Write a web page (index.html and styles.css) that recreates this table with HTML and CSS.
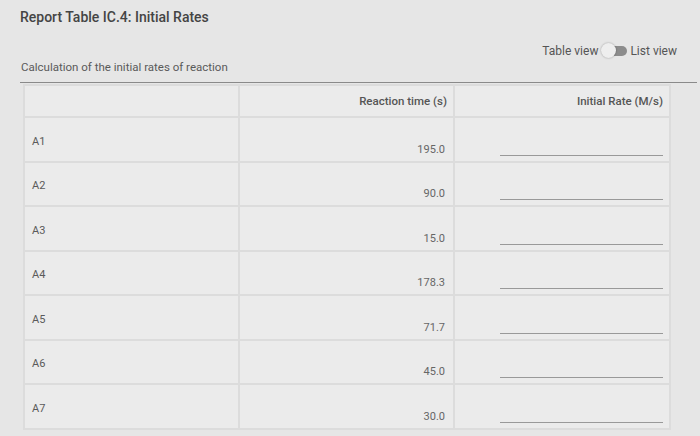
FILE: index.html
```html
<!DOCTYPE html>
<html>
<head>
<meta charset="utf-8">
<link rel="stylesheet" href="styles.css">
</head>
<body>
<div class="page">
  <h1 class="title">Report Table IC.4: Initial Rates</h1>
  <div class="toggle-row">
    <span class="toggle-label">Table view</span>
    <span class="switch"><span class="track"></span><span class="knob"></span></span>
    <span class="toggle-label">List view</span>
  </div>
  <div class="caption">Calculation of the initial rates of reaction</div>
  <table class="data">
    <thead>
      <tr>
        <th class="c1"></th>
        <th class="c2">Reaction time (s)</th>
        <th class="c3">Initial Rate (M/s)</th>
      </tr>
    </thead>
    <tbody>
      <tr><td class="label">A1</td><td class="val">195.0</td><td class="inp"><span class="line"></span></td></tr>
      <tr><td class="label">A2</td><td class="val">90.0</td><td class="inp"><span class="line"></span></td></tr>
      <tr><td class="label">A3</td><td class="val">15.0</td><td class="inp"><span class="line"></span></td></tr>
      <tr><td class="label">A4</td><td class="val">178.3</td><td class="inp"><span class="line"></span></td></tr>
      <tr><td class="label">A5</td><td class="val">71.7</td><td class="inp"><span class="line"></span></td></tr>
      <tr><td class="label">A6</td><td class="val">45.0</td><td class="inp"><span class="line"></span></td></tr>
      <tr><td class="label">A7</td><td class="val">30.0</td><td class="inp"><span class="line"></span></td></tr>
    </tbody>
  </table>
</div>
</body>
</html>
```
FILE: styles.css
```css
html, body {
  margin: 0;
  padding: 0;
  background: #e6e6e6;
}
body {
  font-family: Roboto, "Liberation Sans", Arial, sans-serif;
  color: #555;
}
.page {
  padding: 8px 3px 0 20px;
}
.title {
  margin: 0;
  font-size: 14px;
  font-weight: 500;
  color: #444;
  line-height: 18px;
}
.toggle-row {
  display: flex;
  justify-content: flex-end;
  align-items: center;
  gap: 3px;
  margin-top: 17px;
  padding-right: 20px;
  height: 16px;
}
.toggle-label {
  font-size: 12px;
  color: #555;
}
.switch {
  position: relative;
  width: 26px;
  height: 16px;
  display: inline-block;
}
.track {
  position: absolute;
  left: 6px;
  top: 3px;
  width: 20px;
  height: 10px;
  border-radius: 5px;
  background: #8c8c8c;
}
.knob {
  position: absolute;
  left: 0;
  top: 0;
  width: 15px;
  height: 15px;
  border-radius: 50%;
  background: #eeeeee;
  box-shadow: 0 0 2px rgba(0,0,0,0.35);
}
.caption {
  font-size: 11.5px;
  color: #5a5a5a;
  padding: 1px 0 8px 1px;
  border-bottom: 1px solid #8a8a8a;
}
.data {
  margin-left: 3px;
  margin-top: 1px;
  border-collapse: collapse;
  width: 648px;
  table-layout: fixed;
}
.data th, .data td {
  border: 2px solid #dcdcdc;
  background: #ebebeb;
  padding: 0;
}
.data th {
  height: 30px;
  font-size: 11.5px;
  font-weight: 500;
  color: #555;
  text-align: right;
  padding-right: 6px;
  vertical-align: middle;
}
.c1 { width: 207px; }
.c2 { width: 207px; }
.data td {
  height: 37.5px;
}
.label {
  font-size: 11px;
  color: #5a5a5a;
  padding-left: 7px !important;
  padding-top: 4px !important;
  vertical-align: middle;
}
.val {
  text-align: right;
  font-size: 11px;
  color: #666;
  padding-right: 8px !important;
  vertical-align: bottom;
  padding-bottom: 5px !important;
}
.inp {
  vertical-align: bottom;
  text-align: right;
  padding-right: 6px !important;
  padding-bottom: 5px !important;
}
.line {
  display: inline-block;
  width: 163px;
  height: 1px;
  background: #999;
  vertical-align: bottom;
}
```
